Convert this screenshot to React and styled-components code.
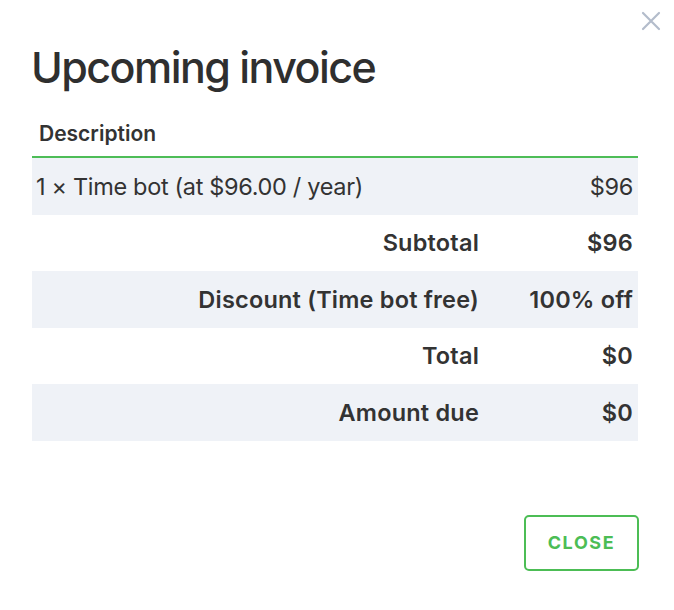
import styled, { createGlobalStyle } from "styled-components";

const GlobalStyle = createGlobalStyle`
  html, body {
    margin: 0;
    padding: 0;
    background: #ffffff;
  }
  body {
    font-family: Inter, "Noto Sans", sans-serif;
    color: #333333;
  }
`;

const rows = [
  { label: "Subtotal", value: "$96" },
  { label: "Discount (Time bot free)", value: "100% off" },
  { label: "Total", value: "$0" },
  { label: "Amount due", value: "$0" },
];

const App = () => {
  return (
    <>
      <GlobalStyle />
      <Modal>
        <CloseIcon aria-label="close">
          <svg width="20" height="20" viewBox="0 0 20 20">
            <path
              d="M2 2 L18 18 M18 2 L2 18"
              stroke="#b3bccb"
              strokeWidth="2.2"
              strokeLinecap="round"
            />
          </svg>
        </CloseIcon>
        <Title>Upcoming invoice</Title>
        <Table>
          <HeadCell>Description</HeadCell>
          <HeadCell />
          <Cell $shaded>1 × Time bot (at $96.00 / year)</Cell>
          <Cell $shaded $right>
            $96
          </Cell>
          {rows.map((row, i) => (
            <Row key={row.label}>
              <Cell $shaded={i % 2 === 1} $right $bold $label>
                {row.label}
              </Cell>
              <Cell $shaded={i % 2 === 1} $right $bold>
                {row.value}
              </Cell>
            </Row>
          ))}
        </Table>
        <Footer>
          <CloseButton>CLOSE</CloseButton>
        </Footer>
      </Modal>
    </>
  );
};

export default App;

const Modal = styled.div`
  position: relative;
  width: 674px;
  height: 610px;
  box-sizing: border-box;
  padding: 40px 36px 0 31px;
  display: flex;
  flex-direction: column;
`;

const CloseIcon = styled.div`
  position: absolute;
  top: 11px;
  right: 13px;
  width: 20px;
  height: 20px;
  display: flex;
`;

const Title = styled.h1`
  margin: 0;
  font-size: 43px;
  font-weight: 500;
  line-height: 54px;
  letter-spacing: -1.55px;
  color: #2f2f2f;
`;

const Table = styled.div`
  margin-top: 22px;
  margin-left: 1px;
  display: grid;
  grid-template-columns: 1fr 159px;
`;

const Row = styled.div`
  display: contents;
`;

const HeadCell = styled.div`
  height: 42px;
  box-sizing: border-box;
  padding: 5px 7px 0;
  font-size: 21px;
  font-weight: 600;
  color: #333;
  border-bottom: 2px solid #4dbd57;
`;

const Cell = styled.div`
  height: 56.5px;
  box-sizing: border-box;
  display: flex;
  align-items: center;
  justify-content: ${(p) => (p.$right ? "flex-end" : "flex-start")};
  padding: ${(p) => (p.$label ? "0 0 0 4px" : "0 5px 0 4px")};
  background: ${(p) => (p.$shaded ? "#eff2f7" : "#ffffff")};
  font-size: 23.5px;
  font-weight: ${(p) => (p.$bold ? 600 : 400)};
  letter-spacing: ${(p) => (p.$bold ? "0.2px" : "-0.33px")};
  color: #333;
  white-space: nowrap;
`;

const Footer = styled.div`
  margin-top: 74px;
  display: flex;
  justify-content: flex-end;
`;

const CloseButton = styled.button`
  width: 115px;
  height: 56px;
  margin-right: -1px;
  box-sizing: border-box;
  border: 2px solid #4cbd55;
  border-radius: 5px;
  background: #ffffff;
  color: #4cbd55;
  font-family: Inter, "Noto Sans", sans-serif;
  font-size: 18px;
  font-weight: 700;
  letter-spacing: 1.6px;
  cursor: pointer;
`;
